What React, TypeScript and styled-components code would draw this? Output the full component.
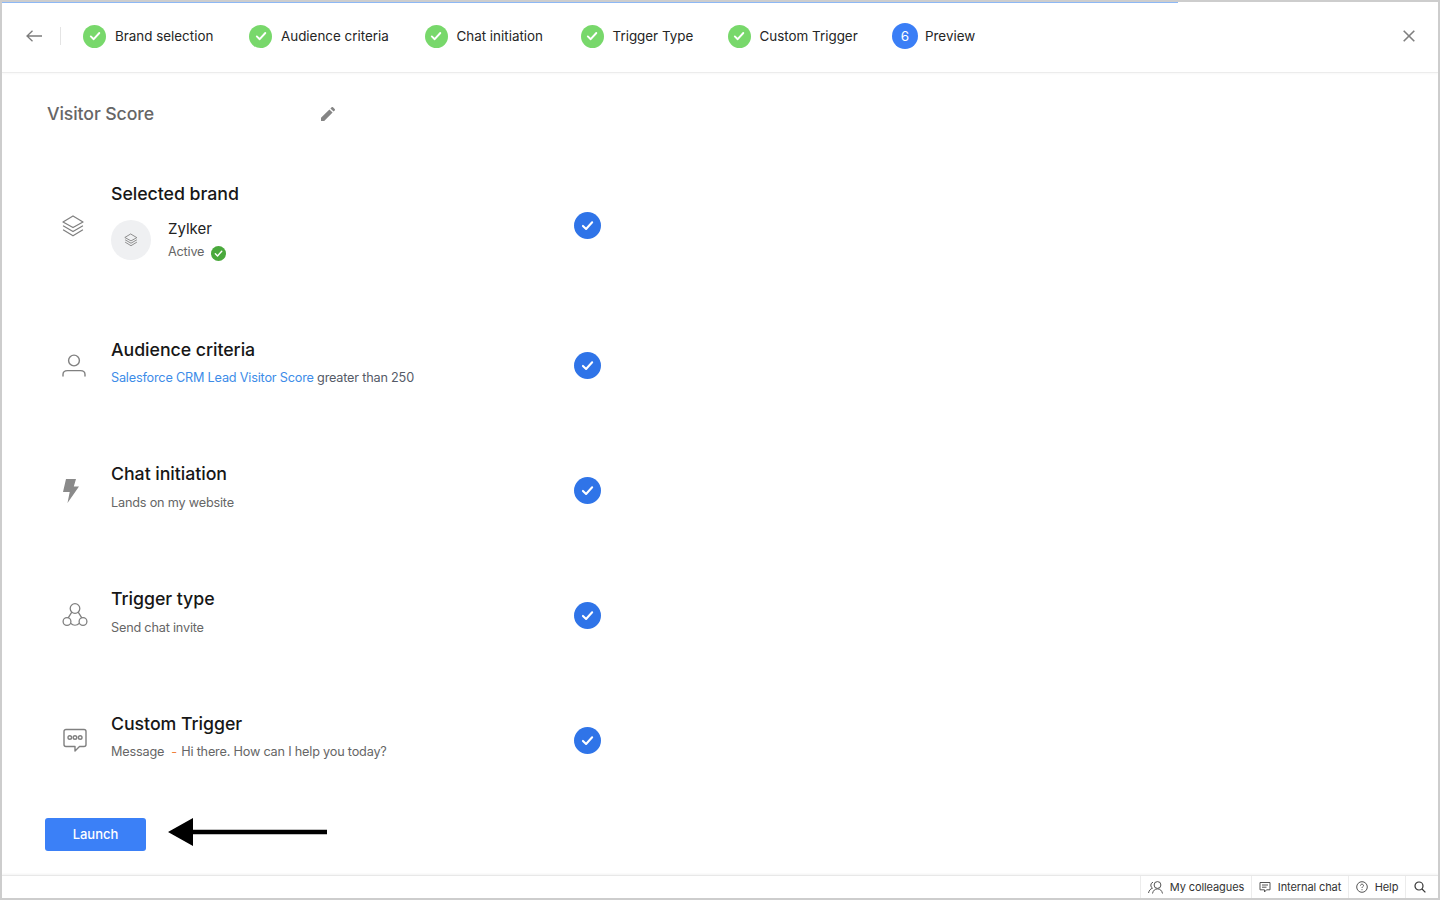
import React from "react";
import styled, { createGlobalStyle } from "styled-components";

const Global = createGlobalStyle`
  html, body { margin: 0; padding: 0; background: #fff; }
  body { font-family: Inter, "Noto Sans", "Liberation Sans", sans-serif; -webkit-font-smoothing: antialiased; }
  * { box-sizing: border-box; }
`;

const Frame = styled.div`
  width: 1440px; height: 900px; border: 2px solid #cdcdcd;
  display: flex; flex-direction: column; background: #fff; position: relative; overflow: hidden;
`;
const Progress = styled.div`
  position: absolute; left: 0; top: 0; height: 1px; width: 1176px; background: #8db8f5;
`;
const Header = styled.header`
  height: 71px; flex: none; display: flex; align-items: center; padding: 0 23px 2px 24px;
  border-bottom: 1px solid #ececec; box-shadow: 0 1px 2px rgba(0,0,0,.03);
`;
const Back = styled.button`
  all: unset; width: 34px; height: 18px; display: flex; align-items: center; border-right: 1px solid #e4e4e4; margin-right: 22px;
`;
const Steps = styled.div`display: flex; align-items: center; flex: 1;`;
const Step = styled.div<{ $w: number }>`
  display: flex; align-items: center; width: ${p => p.$w}px;
  font-size: 13.4px; color: #252525; white-space: nowrap;
`;
const Done = styled.span`
  width: 23px; height: 23px; border-radius: 50%; background: #78d86b; display: flex; align-items: center; justify-content: center;
  margin-right: 9px; flex: none;
`;
const Current = styled.span`
  width: 26px; height: 26px; border-radius: 50%; background: #3a7ef6; color: #fff; display: flex; align-items: center; justify-content: center;
  margin-right: 7px; font-size: 13.5px; flex: none;
`;
const Close = styled.button`all: unset; display: flex;`;

const Main = styled.main`flex: 1; display: flex; flex-direction: column; min-height: 0;`;
const TitleRow = styled.div`
  height: 75px; flex: none; width: 288px; margin-left: 45px; padding-top: 29px;
  display: flex; justify-content: space-between; align-items: flex-start;
`;
const PageTitle = styled.h1`
  margin: 0; font-size: 17.7px; font-weight: 500; color: #666; line-height: 24px; letter-spacing: -.1px;
`;
const Pencil = styled.span`display: flex; margin-top: 5px;`;
const Row = styled.section<{ $h: number }>`
  height: ${p => p.$h}px; flex: none; width: 539px; margin-left: 60px;
  display: flex; align-items: center;
`;
const IconCol = styled.div`width: 49px; flex: none; display: flex; align-items: center;`;
const Body = styled.div`flex: 1; padding-bottom: 4px;`;
const BrandBody = styled.div`flex: 1; padding-bottom: 6px;`;
const RowTitle = styled.h2<{ $gap?: number }>`
  margin: 0 0 ${p => p.$gap ?? 8.5}px; font-size: 17.75px; line-height: 20px; font-weight: 500; color: #171717; letter-spacing: -.05px;
`;
const Sub = styled.p`
  margin: 0; font-size: 12.7px; letter-spacing: -.2px; line-height: 20px; color: #666; white-space: nowrap;
`;
const Link = styled.span`color: #3d8ce8;`;
const Slate = styled.span`color: #555b68;`;
const Dash = styled.span`color: #f0803c; margin: 0 1px 0 7px;`;
const Check = styled.span`
  width: 27px; height: 27px; border-radius: 50%; background: #2f74e8; display: flex; align-items: center; justify-content: center; flex: none;
`;
const Brand = styled.div`display: flex; align-items: center; gap: 17px; margin-top: -1px;`;
const Avatar = styled.div`
  width: 40px; height: 40px; border-radius: 50%; background: #eff0f2; display: flex; align-items: center; justify-content: center; flex: none;
`;
const BrandName = styled.div`font-size: 15px; line-height: 20px; color: #222;`;
const Active = styled.div`
  display: flex; align-items: center; gap: 7px; font-size: 12.7px; letter-spacing: -.2px; line-height: 20px; color: #666; margin-top: 3px;
`;
const ActiveDot = styled.span`
  width: 15px; height: 15px; border-radius: 50%; background: #4aa93c; display: flex; align-items: center; justify-content: center; margin-top: 3px;
`;
const Actions = styled.div`
  display: flex; align-items: flex-start; margin-left: 43px; margin-top: 15px; gap: 22px;
`;
const Launch = styled.button`
  all: unset; width: 101px; height: 33px; border-radius: 3px; background: #3b80f7; color: #fff; font-size: 13px; font-weight: 500;
  display: flex; align-items: center; justify-content: center;
`;
const Footer = styled.footer`
  height: 23px; flex: none; margin-top: auto; border-top: 1px solid #e8e8e8; box-shadow: 0 -1px 2px rgba(0,0,0,.05);
  display: flex; justify-content: flex-end;
`;
const FootItem = styled.div<{ $w: number }>`
  width: ${p => p.$w}px; height: 100%; border-left: 1px solid #ececec; display: flex; align-items: center; justify-content: center; gap: 7px;
  font-size: 11px; letter-spacing: -.1px; color: #333; white-space: nowrap;
`;
const SearchItem = styled(FootItem)`padding-right: 5px;`;
const StackWrap = styled.span`display: flex; margin-left: -1px;`;

const Tick = ({ s = 12, c = "#fff" }: { s?: number; c?: string }) => (
  <svg width={s} height={s} viewBox="0 0 12 12" fill="none"><path d="M1.8 6.4 4.7 9.2 10.3 3" stroke={c} strokeWidth="1.9" strokeLinecap="round" strokeLinejoin="round" /></svg>
);
const Stack = ({ s, w = 1.3, c = "#808080" }: { s: number; w?: number; c?: string }) => (
  <svg width={s} height={s} viewBox="0 0 24 24" fill="none" stroke={c} strokeWidth={w} strokeLinejoin="round" strokeLinecap="round">
    <path d="M12 2 22 8 12 13.5 2 8Z" />
    <path d="M2.5 12 12 17.5 21.5 12" />
    <path d="M2.5 16 12 21.8 21.5 16" />
  </svg>
);

const steps: [string, number][] = [
  ["Brand selection", 166], ["Audience criteria", 175.5], ["Chat initiation", 156], ["Trigger Type", 147], ["Custom Trigger", 164.5],
];
const rows = [
  { t: "Audience criteria", icon: (
    <svg width="26" height="26" viewBox="0 0 26 26" fill="none" stroke="#808080" strokeWidth="1.4" strokeLinecap="round" style={{ marginLeft: -1 }}><circle cx="13" cy="7.5" r="5.4" /><path d="M2 23v-1.5C2 19 4 17.6 6.5 17.6h13c2.5 0 4.5 1.4 4.5 3.9V23" /></svg>
  ), sub: <><Link>Salesforce CRM Lead Visitor Score</Link> <Slate>greater than 250</Slate></> },
  { t: "Chat initiation", icon: (
    <svg width="18" height="26" viewBox="0 0 18 26" fill="#8a8a8a"><path d="M4 1h10l-2.2 7.5H17L5.5 25l2.2-11H1Z" /></svg>
  ), sub: <>Lands on my website</> },
  { t: "Trigger type", icon: (
    <svg width="26" height="26" viewBox="0 0 26 26" fill="none" stroke="#808080" strokeWidth="1.3"><circle cx="13" cy="6.5" r="4.8" /><circle cx="5" cy="19.5" r="3.9" /><circle cx="21" cy="19.5" r="3.9" /><path d="M9.8 10.2 6.2 15.8M16.2 10.2l3.6 5.6M8.6 21.2c2.6 2.5 6.2 2.5 8.8 0" /></svg>
  ), sub: <>Send chat invite</> },
  { t: "Custom Trigger", icon: (
    <svg width="26" height="26" viewBox="0 0 26 26" fill="none" stroke="#808080" strokeWidth="1.4" strokeLinejoin="round"><path d="M4 2.5h18a2 2 0 0 1 2 2v13a2 2 0 0 1-2 2h-4.5l-4.5 4.5v-4.5H4a2 2 0 0 1-2-2v-13a2 2 0 0 1 2-2Z" /><circle cx="7.8" cy="10.5" r="1.8" /><circle cx="13" cy="10.5" r="1.8" /><circle cx="18.2" cy="10.5" r="1.8" /></svg>
  ), sub: <>Message<Dash>-</Dash> Hi there. How can I help you today?</> },
];

export default function App() {
  return (
    <Frame>
      <Global />
      <Progress />
      <Header>
        <Back aria-label="Back">
          <svg width="16" height="12" viewBox="0 0 16 12" fill="none" stroke="#7c7c7c" strokeWidth="1.3"><path d="M16 6H1M6.5.8 1 6l5.5 5.2" /></svg>
        </Back>
        <Steps>
          {steps.map(([l, w]) => <Step key={l} $w={w}><Done><Tick /></Done>{l}</Step>)}
          <Step $w={100}><Current>6</Current>Preview</Step>
        </Steps>
        <Close aria-label="Close">
          <svg width="12" height="12" viewBox="0 0 12 12" stroke="#7f7f7f" strokeWidth="1.6"><path d="M.7.7l10.6 10.6M11.3.7.7 11.3" /></svg>
        </Close>
      </Header>
      <Main>
        <TitleRow>
          <PageTitle>Visitor Score</PageTitle>
          <Pencil>
            <svg width="14" height="14" viewBox="0 0 14 14" fill="#858585"><path d="M0 14V10.8L8.4 2.4l3.2 3.2L3.2 14ZM9.4 1.4 10.6.3a1 1 0 0 1 1.4 0l1.7 1.7a1 1 0 0 1 0 1.4l-1.1 1.2Z" /></svg>
          </Pencil>
        </TitleRow>
        <Row $h={155.5}>
          <IconCol><StackWrap><Stack s={24} /></StackWrap></IconCol>
          <BrandBody>
            <RowTitle $gap={16}>Selected brand</RowTitle>
            <Brand>
              <Avatar><Stack s={14} w={1.5} /></Avatar>
              <div>
                <BrandName>Zylker</BrandName>
                <Active>Active<ActiveDot><Tick s={9} /></ActiveDot></Active>
              </div>
            </Brand>
          </BrandBody>
          <Check><Tick s={13} /></Check>
        </Row>
        {rows.map(r => (
          <Row key={r.t} $h={124.75}>
            <IconCol>{r.icon}</IconCol>
            <Body><RowTitle>{r.t}</RowTitle><Sub>{r.sub}</Sub></Body>
            <Check><Tick s={13} /></Check>
          </Row>
        ))}
        <Actions>
          <Launch>Launch</Launch>
          <svg width="159" height="28" viewBox="0 0 159 28"><path d="M0 14 25 0v11.8h134v4.4H25V28Z" fill="#000" /></svg>
        </Actions>
      </Main>
      <Footer>
        <FootItem $w={111}>
          <svg width="15" height="13" viewBox="0 0 15 13" fill="none" stroke="#555" strokeWidth="1"><circle cx="9.5" cy="4" r="3.4" /><path d="M4.5 12.5c.6-3 2.5-4.6 5-4.6s4.4 1.6 5 4.6M5 1.2A3.3 3.3 0 0 0 4.5 7.2C2.5 7.8 1 9.5.5 12" /></svg>
          My colleagues
        </FootItem>
        <FootItem $w={97}>
          <svg width="12" height="12" viewBox="0 0 12 12" fill="none" stroke="#555" strokeWidth="1"><path d="M1 1.5h10v7.3H7.5L5.5 11V8.8H1ZM3 4h6M3 6.2h4.5" /></svg>
          Internal chat
        </FootItem>
        <FootItem $w={57}>
          <svg width="12" height="12" viewBox="0 0 12 12" fill="none" stroke="#555" strokeWidth="1"><circle cx="6" cy="6" r="5.3" /><path d="M4.5 4.6C4.5 3.7 5.2 3.2 6 3.2s1.5.6 1.5 1.3c0 1.2-1.5 1.2-1.5 2.5M6 8.2v1" /></svg>
          Help
        </FootItem>
        <SearchItem $w={33}>
          <svg width="12" height="12" viewBox="0 0 12 12" fill="none" stroke="#333" strokeWidth="1.2"><circle cx="5" cy="5" r="4" /><path d="M8 8l3.4 3.4" /></svg>
        </SearchItem>
      </Footer>
    </Frame>
  );
}
